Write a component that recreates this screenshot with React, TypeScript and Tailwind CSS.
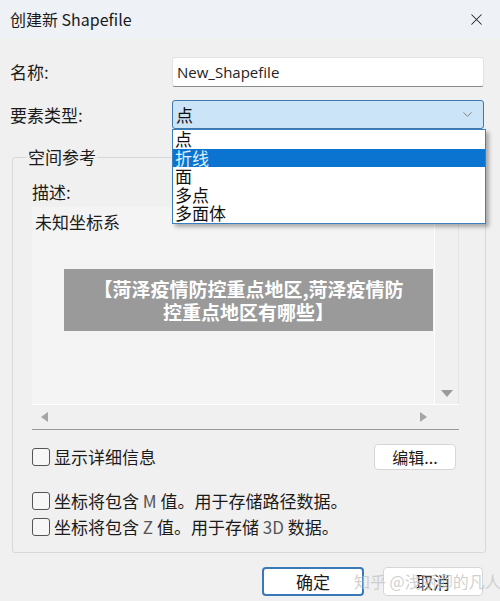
import React from 'react';
import { ChevronDown, X } from 'lucide-react';

const font = { fontFamily: '"Noto Sans CJK SC", "Noto Sans", sans-serif' };

const featureTypes = ['点', '折线', '面', '多点', '多面体'];

function Checkbox({ label }: { label: React.ReactNode }) {
  return (
    <label className="flex items-center h-[26px] text-[17px] text-[#1b1b1b]">
      <span className="w-[18px] h-[18px] border border-[#555] rounded-[3px] bg-[#f7f7f7] mr-[4px]" />
      {label}
    </label>
  );
}

function App() {
  return (
    <div className="relative w-[500px] h-[601px] bg-[#f0f0f0] overflow-hidden" style={font}>
      {/* Title bar */}
      <div className="h-[38px] bg-[#eef2f7] flex items-center justify-between pl-[10px] pr-[14px]">
        <span className="text-[16px] text-[#1b1b1b]">创建新 Shapefile</span>
        <X size={19} strokeWidth={1.3} className="text-[#222]" />
      </div>

      {/* Name + type rows */}
      <div className="pt-[19px] pl-[10px] pr-[16px]">
        <div className="flex items-center h-[30px]">
          <span className="w-[162px] text-[17px] text-[#1b1b1b]">名称:</span>
          <div className="flex-1 h-[30px] bg-white border border-[#e2e2e2] border-b-[#8a8a8a] rounded-[3px] flex items-center pl-[4px] text-[15px] text-[#222]" style={{ fontFamily: '"Open Sans", "Noto Sans", sans-serif' }}>
            New_Shapefile
          </div>
        </div>
        <div className="flex items-center h-[29px] mt-[13px]">
          <span className="w-[162px] text-[17px] text-[#1b1b1b]">要素类型:</span>
          <div className="flex-1 h-[29px] bg-[#cce4f7] border border-[#3d7ab0] rounded-[3px] flex items-center justify-between pl-[3px] pr-[8px] text-[17px] text-[#111]">
            点
            <ChevronDown size={15} strokeWidth={1.4} className="text-[#777]" />
          </div>
        </div>
      </div>

      {/* Spatial reference group */}
      <fieldset className="ml-[12px] mr-[14px] mt-[18px] border border-[#d8d8d8] rounded-[3px] pl-[14px] pr-0 pb-[12px]">
        <legend className="px-[1px] text-[17px] leading-[20px] text-[#1b1b1b]">空间参考</legend>
        <div className="pl-[5px]">
          <div className="mt-[15px] text-[17px] leading-[20px] text-[#1b1b1b]">描述:</div>
          <div className="w-[427px] h-[223px] mt-[5px] border-b border-[#9a9a9a] flex flex-col">
            <div className="flex flex-1">
              <div className="w-[403px] bg-[#f4f4f4] border-r border-white px-[3px] pt-[4px] text-[17px] leading-[22px] text-[#1b1b1b]">
                未知坐标系
              </div>
              <div className="flex-1 flex flex-col items-center justify-between py-[7px] border-r border-[#e4e4e4]">
                <span className="w-0 h-0 border-x-[5px] border-x-transparent border-b-[6px] border-b-[#9a9a9a]" />
                <span className="w-0 h-0 border-x-[6px] border-x-transparent border-t-[7px] border-t-[#9a9a9a]" />
              </div>
            </div>
            <div className="h-[25px] flex items-center justify-between pl-[9px] pr-[32px] border-t border-white">
              <span className="w-0 h-0 border-y-[5px] border-y-transparent border-r-[7px] border-r-[#a5a5a5]" />
              <span className="w-0 h-0 border-y-[5px] border-y-transparent border-l-[7px] border-l-[#a5a5a5]" />
            </div>
          </div>

          <div className="flex items-center justify-between w-[424px] mt-[14px]">
            <Checkbox label="显示详细信息" />
            <button className="w-[82px] h-[26px] bg-white border border-[#d6d6d6] rounded-[4px] text-[16px] text-[#1b1b1b]">
              编辑...
            </button>
          </div>

          <div className="mt-[18px]">
            <Checkbox
              label={
                <span>
                  坐标将包含 <span className="text-[#555]">M</span> 值。用于存储路径数据。
                </span>
              }
            />
            <Checkbox
              label={
                <span>
                  坐标将包含 <span className="text-[#555]">Z</span> 值。用于存储 <span className="text-[#555]">3D</span> 数据。
                </span>
              }
            />
          </div>
        </div>
      </fieldset>

      {/* Dialog buttons */}
      <div className="flex justify-end gap-[19px] pr-[17px] mt-[14px]">
        <button className="w-[102px] h-[29px] bg-white border-2 border-[#3b78b8] rounded-[4px] text-[17px] text-[#1b1b1b]">
          确定
        </button>
        <button className="w-[100px] h-[29px] bg-white border border-[#d6d6d6] rounded-[4px] text-[17px] text-[#1b1b1b]">
          取消
        </button>
      </div>

      {/* Open dropdown list */}
      <div className="absolute left-[172px] top-[129px] w-[314px] h-[95px] bg-white border border-[#3b7fc0] shadow-[3px_3px_4px_rgba(0,0,0,0.3)] overflow-hidden">
        {featureTypes.map((t, i) => (
          <div
            key={t}
            className={
              i === 1
                ? 'h-[18.5px] leading-[18.5px] pl-[2px] text-[17px] bg-[#0a74d0] text-[#dff0ff]'
                : 'h-[18.5px] leading-[18.5px] pl-[2px] text-[17px] text-[#111]'
            }
          >
            {t}
          </div>
        ))}
      </div>

      {/* Article banner */}
      <div className="absolute left-[64px] top-[269px] w-[369px] h-[62px] bg-[#9a9a9a] flex flex-col items-center justify-center text-white text-[19px] font-bold leading-[23px]">
        <span>【菏泽疫情防控重点地区,菏泽疫情防</span>
        <span>控重点地区有哪些】</span>
      </div>

      {/* Watermark */}
      <div className="absolute left-[354px] top-[569px] text-[16px] text-[#c4c4c4]/80 whitespace-nowrap">
        知乎 @浅丽卿的凡人
      </div>
    </div>
  );
}

export default App;
